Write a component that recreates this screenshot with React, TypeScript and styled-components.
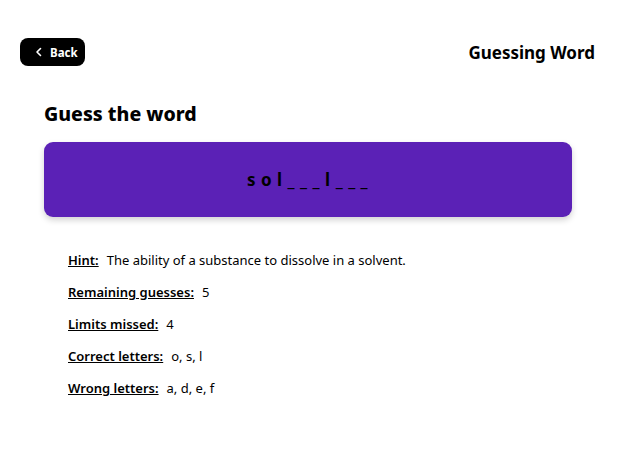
import React from 'react';
import styled, { createGlobalStyle } from 'styled-components';

const GlobalStyle = createGlobalStyle`
  body {
    margin: 0;
    background: #ffffff;
    font-family: 'Noto Sans', 'Open Sans', sans-serif;
    color: #000;
  }
`;

const Page = styled.div`
  width: 636px;
  padding: 38px 41px 0 20px;
  box-sizing: border-box;
`;

const TopBar = styled.div`
  display: flex;
  align-items: center;
  justify-content: space-between;
  height: 28px;
`;

const BackButton = styled.button`
  display: flex;
  align-items: center;
  gap: 6px;
  height: 28px;
  width: 65px;
  padding: 0 0 0 14px;
  border: none;
  border-radius: 8px;
  background: #000;
  color: #fff;
  font-family: 'Noto Sans', sans-serif;
  font-size: 11.5px;
  font-weight: 700;
  cursor: pointer;
`;

const PageTitle = styled.h1`
  margin: 0;
  font-size: 17px;
  font-weight: 700;
`;

const Content = styled.div`
  padding: 35px 23px 0 24px;
`;

const Heading = styled.h2`
  margin: 0 0 15px;
  font-size: 19.5px;
  font-weight: 800;
  line-height: 26px;
`;

const WordBox = styled.div`
  height: 75px;
  border-radius: 9px;
  background: #5b21b6;
  box-shadow: 0 3px 6px rgba(0, 0, 0, 0.18);
  display: flex;
  align-items: center;
  justify-content: center;
  padding-left: 4px;
  font-size: 17px;
  font-weight: 700;
  letter-spacing: 5.5px;
  color: #000;
`;

const Details = styled.ul`
  list-style: none;
  margin: 0;
  padding: 34px 0 0 24px;
  display: flex;
  flex-direction: column;
  gap: 14px;
`;

const Item = styled.li`
  display: flex;
  gap: 8px;
  font-size: 13px;
  line-height: 18px;
`;

const Label = styled.span`
  font-weight: 600;
  text-decoration: underline;
`;

const ChevronLeft = () => (
  <svg width="10" height="10" viewBox="0 0 10 10" fill="none">
    <path d="M6.5 1.5 L3 5 L6.5 8.5" stroke="#fff" strokeWidth="1.6" strokeLinecap="round" strokeLinejoin="round" />
  </svg>
);

const details = [
  { label: 'Hint:', value: 'The ability of a substance to dissolve in a solvent.' },
  { label: 'Remaining guesses:', value: '5' },
  { label: 'Limits missed:', value: '4' },
  { label: 'Correct letters:', value: 'o, s, l' },
  { label: 'Wrong letters:', value: 'a, d, e, f' },
];

function App() {
  return (
    <Page>
      <GlobalStyle />
      <TopBar>
        <BackButton>
          <ChevronLeft />
          Back
        </BackButton>
        <PageTitle>Guessing Word</PageTitle>
      </TopBar>
      <Content>
        <Heading>Guess the word</Heading>
        <WordBox>sol___l___</WordBox>
        <Details>
          {details.map((d) => (
            <Item key={d.label}>
              <Label>{d.label}</Label>
              <span>{d.value}</span>
            </Item>
          ))}
        </Details>
      </Content>
    </Page>
  );
}

export default App;
